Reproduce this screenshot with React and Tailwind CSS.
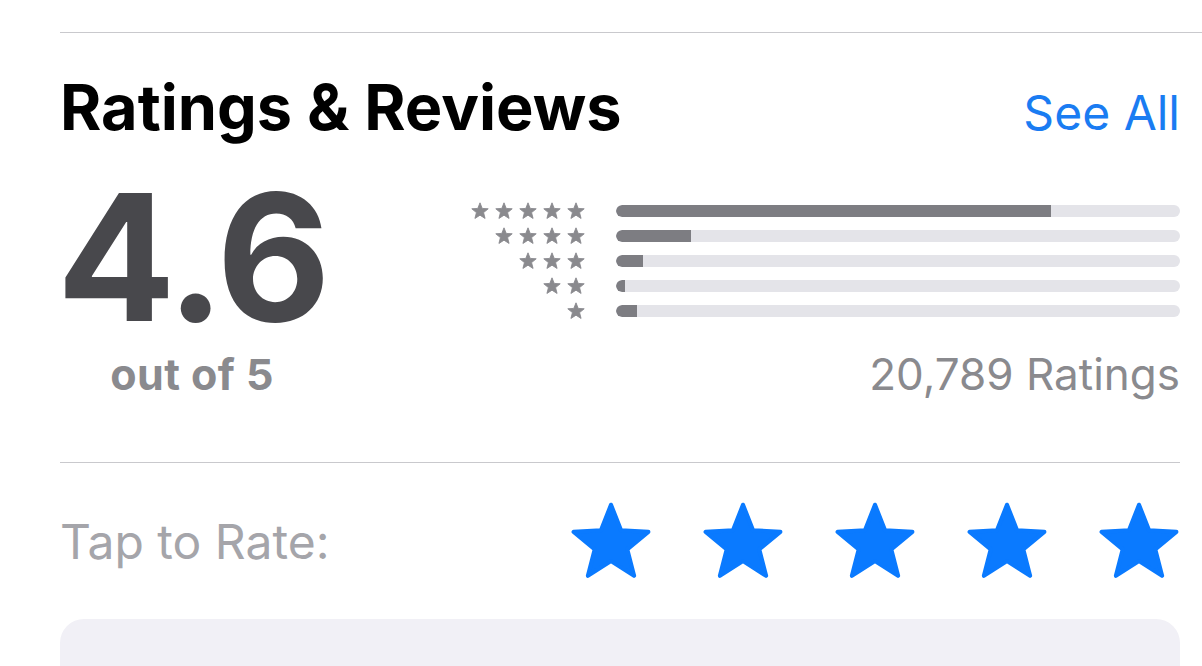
import React from 'react';

const STAR_POINTS =
  '12,1.1 14.94,8.56 22.94,9.05 16.76,14.15 18.76,21.9 12,17.6 5.24,21.9 7.24,14.15 1.06,9.05 9.06,8.56';

function Star({ className }) {
  return (
    <svg viewBox="0 0 24 24" className={className}>
      <polygon points={STAR_POINTS} fill="currentColor" stroke="currentColor" strokeWidth="1.2" strokeLinejoin="round" />
    </svg>
  );
}

const rows = [
  { stars: 5, pct: 77.1 },
  { stars: 4, pct: 13.3 },
  { stars: 3, pct: 4.8 },
  { stars: 2, pct: 1.6 },
  { stars: 1, pct: 3.7 },
];

export default function App() {
  return (
    <div className="min-h-screen w-full bg-white overflow-hidden" style={{ fontFamily: 'Inter, "Open Sans", sans-serif' }}>
      <div className="pt-[32px] pl-[60px]">
        <div className="h-px bg-[#c9c9cd]" />
      </div>

      <div className="pl-[60px] pr-[22px]">
        <div className="mt-[43px] flex items-baseline justify-between">
          <h2 className="text-[63px] font-bold leading-none text-black">Ratings &amp; Reviews</h2>
          <span className="text-[48px] leading-none text-[#1a7cf2]">See All</span>
        </div>

        <div className="mt-[34px] flex">
          <div className="flex w-[264px] flex-col items-center">
            <span className="text-[176px] font-bold leading-[0.96] tracking-[-0.02em] text-[#48484c]">4.6</span>
            <span className="mt-[11px] text-[43px] font-bold leading-none tracking-[0.01em] text-[#8a8a8e]">out of 5</span>
          </div>

          <div className="flex flex-1 flex-col">
            <div className="mt-[25px] flex flex-col">
              {rows.map((r) => (
                <div key={r.stars} className="flex h-[25px] items-center">
                  <div className="flex w-[261px] justify-end gap-[6px] text-[#8a8a8e]">
                    {Array.from({ length: r.stars }).map((_, i) => (
                      <Star key={i} className="h-[18px] w-[18px]" />
                    ))}
                  </div>
                  <div className="ml-[31px] h-[12px] flex-1 overflow-hidden rounded-full bg-[#e4e4e9]">
                    <div className="h-full rounded-l-full bg-[#7d7d82]" style={{ width: `${r.pct}%` }} />
                  </div>
                </div>
              ))}
            </div>
            <div className="mt-[29px] text-right text-[44px] leading-none text-[#8a8a8e]">20,789 Ratings</div>
          </div>
        </div>

        <div className="mt-[66px] h-px bg-[#c9c9cd]" />

        <div className="mt-[37px] flex items-center justify-between">
          <span className="text-[48px] leading-none text-[#a5a5aa]">Tap to Rate:</span>
          <div className="flex h-[84px] items-center gap-[50px] text-[#0a7aff]">
            {[0, 1, 2, 3, 4].map((i) => (
              <Star key={i} className="h-[82px] w-[82px]" />
            ))}
          </div>
        </div>

        <div className="mt-[35px] h-[120px] rounded-[24px] bg-[#f1f0f6]" />
      </div>
    </div>
  );
}
